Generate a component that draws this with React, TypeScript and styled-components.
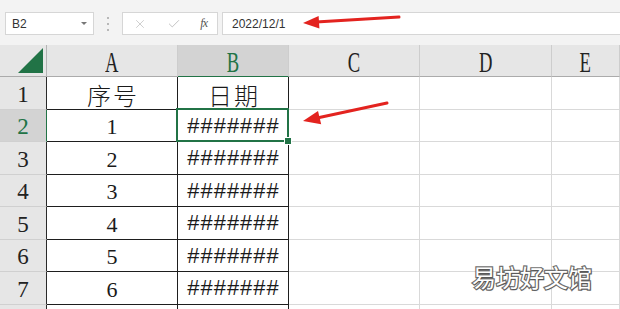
import React from 'react';
import styled, { createGlobalStyle } from 'styled-components';
import { X, Check } from 'lucide-react';

const GlobalStyle = createGlobalStyle`
  html, body {
    margin: 0;
    padding: 0;
    background: #fff;
  }
  body {
    width: 620px;
    height: 309px;
    overflow: hidden;
    font-family: "Liberation Serif", serif;
  }
`;

const Page = styled.div`
  position: relative;
  width: 620px;
  height: 309px;
  overflow: hidden;
  background: #fff;
`;

const Toolbar = styled.div`
  height: 45px;
  box-sizing: border-box;
  padding: 12px 0 10px 5px;
  background: #f3f3f3;
  display: flex;
  align-items: stretch;
`;

const NameBox = styled.div`
  width: 89px;
  box-sizing: border-box;
  background: #fff;
  border: 1px solid #d6d6d6;
  display: flex;
  align-items: center;
  justify-content: space-between;
  padding: 0 6px 0 6px;
  font-family: "Liberation Sans", Arial, sans-serif;
  font-size: 12px;
  color: #333;
`;

const Caret = styled.span`
  width: 0;
  height: 0;
  border-left: 3px solid transparent;
  border-right: 3px solid transparent;
  border-top: 3px solid #777;
`;

const Dots = styled.div`
  width: 28px;
  display: flex;
  flex-direction: column;
  align-items: center;
  justify-content: center;
  gap: 4px;
`;

const Dot = styled.span`
  width: 2px;
  height: 2px;
  background: #b8b8b8;
`;

const FormulaButtons = styled.div`
  width: 96px;
  box-sizing: border-box;
  background: #fff;
  border: 1px solid #d6d6d6;
  display: flex;
  align-items: center;
  justify-content: space-between;
  padding: 0 10px 0 10px;
  color: #c0c0c0;
`;

const Fx = styled.span`
  font-family: "Liberation Serif", serif;
  font-style: italic;
  font-size: 12px;
  color: #555;
  letter-spacing: -1px;
`;

const FormulaInput = styled.div`
  flex: 1;
  margin-left: 4px;
  margin-right: -2px;
  background: #fff;
  border: 1px solid #d6d6d6;
  display: flex;
  align-items: center;
  padding-left: 9px;
  font-family: "Liberation Sans", Arial, sans-serif;
  font-size: 12px;
  color: #333;
`;

const Sheet = styled.div`
  display: grid;
  grid-template-columns: 47px 131px 111px 131px 132px 1fr;
  grid-template-rows: 32px repeat(8, 32.5px);
`;

const Corner = styled.div`
  position: relative;
  background: #e6e6e6;
  border-right: 1px solid #b4b4b4;
  border-bottom: 1px solid #ababab;
`;

const CornerMark = styled.div`
  position: absolute;
  right: 3px;
  bottom: 3px;
  width: 25px;
  height: 25px;
  background: #217346;
  clip-path: polygon(100% 0, 100% 100%, 0 100%);
`;

const ColHeader = styled.div<{ $selected?: boolean }>`
  box-sizing: border-box;
  background: ${p => (p.$selected ? '#d3d3d3' : '#e6e6e6')};
  border-right: 1px solid #cdcdcd;
  border-bottom: 1px solid ${p => (p.$selected ? '#217346' : '#ababab')};
  display: flex;
  align-items: center;
  justify-content: center;
  padding-top: 3px;
  overflow: hidden;
  color: ${p => (p.$selected ? '#217346' : '#222')};
`;

const ColLabel = styled.span`
  font-family: "Liberation Serif", serif;
  font-size: 30px;
  line-height: 1;
  display: inline-block;
  transform: scaleX(0.62);
`;

const RowHeader = styled.div<{ $selected?: boolean }>`
  box-sizing: border-box;
  background: ${p => (p.$selected ? '#d3d3d3' : '#e6e6e6')};
  border-right: 1px solid ${p => (p.$selected ? '#217346' : '#2a2a2a')};
  border-bottom: 1px solid #d0d0d0;
  display: flex;
  align-items: center;
  justify-content: center;
  padding-top: 4px;
  font-family: "Liberation Serif", serif;
  font-size: 23px;
  color: ${p => (p.$selected ? '#217346' : '#222')};
`;

const Cell = styled.div<{ $boxed?: boolean }>`
  position: relative;
  box-sizing: border-box;
  border-right: 1px solid ${p => (p.$boxed ? '#1e1e1e' : '#d9d9d9')};
  border-bottom: 1px solid ${p => (p.$boxed ? '#1e1e1e' : '#d9d9d9')};
  display: flex;
  align-items: center;
  justify-content: center;
  padding-top: 4px;
  color: #1a1a1a;
  white-space: nowrap;
  overflow: visible;
`;

const NumText = styled.span`
  font-family: "Liberation Serif", serif;
  font-size: 22px;
`;

const HanText = styled.span`
  font-family: "Noto Sans CJK SC", sans-serif;
  font-size: 24px;
  letter-spacing: 2px;
  font-weight: 300;
  margin-right: -2px;
  line-height: 1;
`;

const HashText = styled.span`
  font-family: "Liberation Mono", monospace;
  font-size: 22px;
`;

const Selection = styled.div`
  position: absolute;
  top: -2px;
  left: -2px;
  right: -1px;
  bottom: -1px;
  border: 2px solid #217346;
  z-index: 2;
  pointer-events: none;
`;

const FillHandle = styled.div`
  position: absolute;
  right: -5px;
  bottom: -5px;
  width: 6px;
  height: 6px;
  background: #217346;
  border: 1px solid #fff;
`;

const Watermark = styled.div`
  position: absolute;
  left: 472px;
  top: 259px;
  font-family: "Noto Sans CJK SC", sans-serif;
  font-size: 24px;
  font-weight: 400;
  color: #fff;
  -webkit-text-stroke: 2.4px #707070;
  paint-order: stroke fill;
  text-shadow: 1px 1px 1px rgba(0, 0, 0, 0.25);
  z-index: 3;
`;

const Arrows = styled.svg`
  position: absolute;
  left: 0;
  top: 0;
  z-index: 4;
  pointer-events: none;
`;

const columns = ['A', 'B', 'C', 'D', 'E'];

const rows: { a: string; b: string; han?: boolean }[] = [
  { a: '序号', b: '日期', han: true },
  { a: '1', b: '#######' },
  { a: '2', b: '#######' },
  { a: '3', b: '#######' },
  { a: '4', b: '#######' },
  { a: '5', b: '#######' },
  { a: '6', b: '#######' },
  { a: '', b: '' },
];

const App: React.FC = () => {
  return (
    <Page>
      <GlobalStyle />
      <Toolbar>
        <NameBox>
          <span>B2</span>
          <Caret />
        </NameBox>
        <Dots>
          <Dot />
          <Dot />
          <Dot />
        </Dots>
        <FormulaButtons>
          <X size={14} strokeWidth={1.3} />
          <Check size={14} strokeWidth={1.6} />
          <Fx>fx</Fx>
        </FormulaButtons>
        <FormulaInput>2022/12/1</FormulaInput>
      </Toolbar>

      <Sheet>
        <Corner>
          <CornerMark />
        </Corner>
        {columns.map(c => (
          <ColHeader key={c} $selected={c === 'B'}>
            <ColLabel>{c}</ColLabel>
          </ColHeader>
        ))}

        {rows.map((r, i) => {
          const n = i + 1;
          // the eighth row only peeks in at the bottom edge, its label is below the fold
          const label = n < 8 ? n : '';
          return (
            <React.Fragment key={n}>
              <RowHeader $selected={n === 2}>{label}</RowHeader>
              <Cell $boxed>
                {r.han ? <HanText>{r.a}</HanText> : <NumText>{r.a}</NumText>}
              </Cell>
              <Cell $boxed>
                {r.han ? <HanText>{r.b}</HanText> : <HashText>{r.b}</HashText>}
                {n === 2 && (
                  <Selection>
                    <FillHandle />
                  </Selection>
                )}
              </Cell>
              <Cell />
              <Cell />
              <Cell />
            </React.Fragment>
          );
        })}
      </Sheet>

      <Watermark>易坊好文馆</Watermark>

      <Arrows width="620" height="309" viewBox="0 0 620 309">
        <line x1="316" y1="22" x2="399" y2="17" stroke="#e3231f" strokeWidth="3" strokeLinecap="round" />
        <polygon points="303,23 319.4,28.5 318.6,16" fill="#e3231f" />
        <line x1="317" y1="118" x2="387" y2="103" stroke="#e3231f" strokeWidth="3" strokeLinecap="round" />
        <polygon points="303,121 321.2,124.2 318,111" fill="#e3231f" />
      </Arrows>
    </Page>
  );
};

export default App;
